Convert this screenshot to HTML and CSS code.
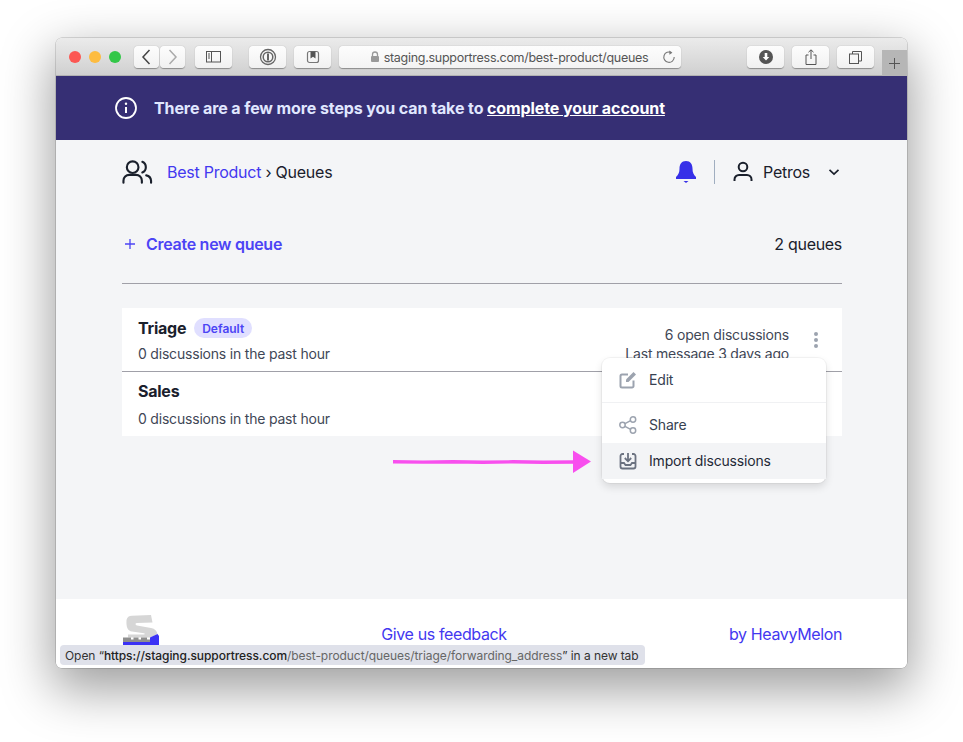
FILE: index.html
```html
<!DOCTYPE html>
<html lang="en">
<head>
<meta charset="utf-8">
<title>Queues</title>
<link rel="stylesheet" href="styles.css">
</head>
<body>
<div class="window">
  <div class="toolbar">
    <div class="lights"><span class="light red"></span><span class="light yellow"></span><span class="light green"></span></div>
    <div class="navpair">
      <div class="tb-btn nav"><svg width="25" height="22" viewBox="0 0 25 22"><path d="M15.5 4 9 11l6.500 7" fill="none" stroke="#444" stroke-width="1.500"/></svg></div>
      <div class="tb-btn nav"><svg width="25" height="22" viewBox="0 0 25 22"><path d="M9.500 4l6.500 7-6.500 7" fill="none" stroke="#aaa" stroke-width="1.500"/></svg></div>
    </div>
    <div class="tb-btn wide sidebar"><svg width="16" height="12" viewBox="0 0 16 12"><rect x=".5" y=".5" width="14" height="10.500" fill="none" stroke="#555"/><path d="M5.500 .5v10.500M2 3h2M2 5h2M2 7h2" stroke="#555" fill="none"/></svg></div>
    <div class="tb-btn wide pw"><svg width="18" height="18" viewBox="0 0 18 18"><circle cx="9" cy="9" r="7.500" fill="none" stroke="#666" stroke-width="1.300"/><circle cx="9" cy="9" r="4.800" fill="none" stroke="#666" stroke-width="1.500"/><path d="M9 5.500v7" stroke="#555" stroke-width="1.800"/></svg></div>
    <div class="tb-btn wide bm"><svg width="14" height="14" viewBox="0 0 14 14"><rect x="1.500" y="1.500" width="11" height="11" rx="2" fill="none" stroke="#777" stroke-width="1.200"/><path d="M4.500 1.500h5v7L7 6.800 4.500 8.500z" fill="#555"/></svg></div>
    <div class="urlbar">
      <span class="url"><svg class="lock" width="10" height="12" viewBox="0 0 10 12"><path d="M2.500 5V3.500a2.500 2.500 0 0 1 5 0V5" fill="none" stroke="#999" stroke-width="1.300"/><rect x="1" y="5" width="8" height="6" rx="1" fill="#999"/></svg>staging.supportress.com/best-product/queues</span>
      <svg class="reload" width="14" height="14" viewBox="0 0 14 14"><path d="M9.500 2.600A5.200 5.200 0 1 0 12.200 7" fill="none" stroke="#777" stroke-width="1.100"/><path d="M7.300 .4 10.400 2.700 7.400 4.800z" fill="#777"/></svg>
    </div>
    <div class="tb-btn wide dl"><svg width="14" height="14" viewBox="0 0 14 14"><circle cx="7" cy="7" r="7" fill="#555"/><path d="M5.700 3h2.600v4h2L7 10.500 3.700 7h2z" fill="#fff"/></svg></div>
    <div class="tb-btn wide share"><svg width="12" height="16" viewBox="0 0 12 16"><path d="M3.500 6H1v9.500h10V6H8.500M6 10V1M3.500 3.200 6 .8l2.500 2.400" fill="none" stroke="#555"/></svg></div>
    <div class="tb-btn wide tabs"><svg width="13" height="13" viewBox="0 0 13 13"><rect x=".5" y="3" width="9" height="9.500" fill="none" stroke="#555"/><path d="M3.500 3V.5h9V10H9.500" fill="none" stroke="#555"/></svg></div>
    <div class="newtab"><svg width="11" height="11" viewBox="0 0 11 11"><path d="M5.500 0v11M0 5.500h11" stroke="#555" stroke-width="1"/></svg></div>
  </div>

  <div class="banner">
    <svg class="banner-icon" width="24" height="24" viewBox="0 0 24 24"><circle cx="12" cy="12" r="10" fill="none" stroke="#fff" stroke-width="1.800"/><path d="M12 11v6" stroke="#fff" stroke-width="2"/><circle cx="12" cy="7.800" r="1.200" fill="#fff"/></svg>
    <p class="banner-text">There are a few more steps you can take to <a class="banner-link" href="#">complete your account</a></p>
  </div>

  <main class="main">
    <header class="head">
      <svg class="users" width="31" height="28" viewBox="0 0 32 28"><circle cx="11" cy="9" r="6" fill="none" stroke="#1a202c" stroke-width="2.200"/><path d="M1.500 25v-2a6 6 0 0 1 6-6h7a6 6 0 0 1 6 6v2" fill="none" stroke="#1a202c" stroke-width="2.200" stroke-linecap="round"/><path d="M21 3.500a6 6 0 0 1 0 11M25 17.500a6 6 0 0 1 5 5.500v2" fill="none" stroke="#1a202c" stroke-width="2.200" stroke-linecap="round"/></svg>
      <div class="crumbs"><a class="crumb-link" href="#">Best Product</a> › Queues</div>
      <svg class="bell" width="22" height="24" viewBox="0 0 22 24"><path d="M11 1c-4.500 0-6.500 3.500-6.500 7.500 0 4-1 6-3.500 8.500v2h20v-2c-2.500-2.500-3.500-4.500-3.500-8.500C17.500 4.500 15.500 1 11 1z" fill="#3730e8"/><path d="M8.500 21h5L11 23z" fill="#3730e8"/></svg>
      <span class="vsep"></span>
      <svg class="user" width="20" height="22" viewBox="0 0 20 22"><circle cx="10" cy="6" r="4.300" fill="none" stroke="#1a202c" stroke-width="2"/><path d="M1.500 20v-1.500a4.500 4.500 0 0 1 4.500-4.500h8a4.500 4.500 0 0 1 4.500 4.500V20" fill="none" stroke="#1a202c" stroke-width="2"/></svg>
      <span class="username">Petros</span>
      <svg class="chev" width="12" height="8" viewBox="0 0 12 8"><path d="M1.500 1.800 6 6l4.500-4.200" fill="none" stroke="#1a202c" stroke-width="1.700"/></svg>
    </header>

    <div class="actions">
      <a class="create" href="#"><svg class="plus" width="12" height="12" viewBox="0 0 12 12"><path d="M6 1v10M1 6h10" stroke="#4c44f5" stroke-width="1.300"/></svg>Create new queue</a>
      <span class="count">2 queues</span>
    </div>
    <hr class="rule">

    <div class="list">
      <div class="row row-first">
        <div class="row-left">
          <div class="title-line"><span class="title">Triage</span><span class="badge">Default</span></div>
          <div class="sub">0 discussions in the past hour</div>
        </div>
        <div class="row-right">
          <div class="meta">6 open discussions</div>
          <div class="meta">Last message 3 days ago</div>
        </div>
        <div class="dots"><span class="dot"></span><span class="dot"></span><span class="dot"></span></div>
      </div>
      <div class="row row-second">
        <div class="row-left">
          <div class="title-line"><span class="title">Sales</span></div>
          <div class="sub sub-wide">0 discussions in the past hour</div>
        </div>
      </div>

      <div class="menu">
        <div class="menu-section">
          <div class="menu-item"><svg class="mi" width="20" height="20" viewBox="0 0 20 20"><path d="M10 4.500H4a1.500 1.500 0 0 0-1.500 1.500v10A1.500 1.500 0 0 0 4 17.500h10a1.500 1.500 0 0 0 1.500-1.500v-5.500" fill="none" stroke="#9ca3af" stroke-width="2"/><path d="M8 12v-2.500L15.500 2 18 4.500 10.500 12z" fill="#9ca3af"/></svg><span class="mi-label">Edit</span></div>
        </div>
        <div class="menu-section divided">
          <div class="menu-item"><svg class="mi" width="20" height="20" viewBox="0 0 20 20"><circle cx="4.500" cy="10" r="2.700" fill="none" stroke="#9ca3af" stroke-width="1.500"/><circle cx="15" cy="4.500" r="2.700" fill="none" stroke="#9ca3af" stroke-width="1.500"/><circle cx="15" cy="15.500" r="2.700" fill="none" stroke="#9ca3af" stroke-width="1.500"/><path d="M7 8.700l5.600-3M7 11.300l5.600 3" stroke="#9ca3af" stroke-width="1.500"/></svg><span class="mi-label">Share</span></div>
          <div class="menu-item active"><svg class="mi" width="20" height="20" viewBox="0 0 20 20"><path d="M6 3H4.500A2 2 0 0 0 2.500 5v10.500a2 2 0 0 0 2 2h11a2 2 0 0 0 2-2V5a2 2 0 0 0-2-2H14" fill="none" stroke="#6b7280" stroke-width="1.800"/><path d="M2.500 12H6l1.500 2h5l1.500-2h3.500" fill="none" stroke="#6b7280" stroke-width="1.800"/><path d="M10 2v8M6.800 7 10 10.300 13.200 7" fill="none" stroke="#6b7280" stroke-width="1.800"/></svg><span class="mi-label">Import discussions</span></div>
        </div>
      </div>
    </div>

    <svg class="arrow" width="202" height="26" viewBox="0 0 202 26"><path d="M2 12.700l30 .4 30-.3 30 .5 30-.5 30 .4 32-.2" fill="none" stroke="#f84fee" stroke-width="3.400"/><path d="M182 1.500 200 12.500 182 24z" fill="#f84fee"/></svg>
  </main>

  <footer class="footer">
    <svg class="logo" width="37" height="30" viewBox="0 0 37 30"><path d="M4.500 5C5 2 7 .8 10 .7L29 0l1.500 7.500L15 8c-2 0-2 2 0 2.500l14 2.500c4 .8 6 3 6.500 6L29 22.500H6v-3h16c1 0 1-1 0-1.200L10 16.500C6 16 4 13 4.500 5z" fill="#d6d6d6"/><path d="M35.500 19 37 21v9H1v-3h27v-4.500z" fill="#3b32f5"/><path d="M1 22.500h8v2h2.500v-2h5v2H19v-2h6v2h3V27H1z" fill="#8f8f8f"/></svg>
    <a class="foot-link" href="#">Give us feedback</a>
    <a class="foot-link" href="#">by HeavyMelon</a>
  </footer>

  <div class="status"><span>Open “</span><span class="st-host">https://staging.supportress.com</span><span class="st-path">/best-product/queues/triage/forwarding_address</span><span>” in a new tab</span></div>
</div>
</body>
</html>
```

FILE: styles.css
```css
* { box-sizing: border-box; }
html, body { margin: 0; background: #fff; }
body {
  width: 963px;
  height: 742px;
  padding: 38px 56px 74px;
  overflow: hidden;
  font-family: Inter, "Noto Sans", sans-serif;
  color: #1a202c;
}
a { text-decoration: none; color: inherit; }

.window {
  position: relative;
  width: 851px;
  height: 630px;
  display: flex;
  flex-direction: column;
  border-radius: 6px;
  overflow: visible;
  background: #fff;
  box-shadow: 0 0 0 .5px rgba(0,0,0,.25), 0 18px 50px 4px rgba(0,0,0,.38);
}

.toolbar {
  height: 38px;
  flex: none;
  display: flex;
  align-items: flex-start;
  padding: 8px 0 0 13px;
  background: linear-gradient(#ebebeb, #d0d0d0);
  border-bottom: 1px solid #b2b2b2;
  border-radius: 6px 6px 0 0;
}
.lights { display: flex; gap: 8px; margin: 5px 13px 0 0; }
.light { width: 12px; height: 12px; border-radius: 50%; }
.red { background: #fc5753; }
.yellow { background: #fdbc40; }
.green { background: #33c748; }

.tb-btn {
  height: 22px;
  flex: none;
  display: flex;
  align-items: center;
  justify-content: center;
  background: linear-gradient(#fdfdfd, #f1f1f1);
  border-radius: 4px;
  box-shadow: 0 .5px 1px rgba(0,0,0,.35);
}
.navpair { display: flex; gap: 1px; margin-right: 10px; }
.nav { width: 25px; }
.wide { width: 37px; }
.sidebar { margin-right: 17px; }
.pw { margin-right: 8px; }
.bm { margin-right: 8px; }
.dl { margin-left: 66px; margin-right: 8px; }
.share { margin-right: 8px; }
.tabs { margin-right: 8px; }

.urlbar {
  position: relative;
  width: 342px;
  height: 22px;
  flex: none;
  display: flex;
  align-items: center;
  justify-content: center;
  background: linear-gradient(#fdfdfd, #f3f3f3);
  border-radius: 4px;
  box-shadow: 0 .5px 1px rgba(0,0,0,.35);
}
.url {
  display: flex;
  align-items: center;
  font-size: 12.5px;
  color: #555;
  padding-right: 2px;
  letter-spacing: -.28px;
}
.lock { margin-right: 4px; }
.reload { position: absolute; right: 5px; top: 4px; }
.newtab {
  width: 25px;
  height: 26px;
  margin-top: 4px;
  flex: none;
  display: flex;
  align-items: center;
  justify-content: center;
  background: #b6b6b6;
}

.banner {
  height: 64px;
  flex: none;
  display: flex;
  align-items: center;
  padding-left: 58px;
  background: #362f74;
}
.banner-icon { flex: none; margin-right: 16px; }
.banner-text { margin: 0; font-size: 16px; font-weight: 700; letter-spacing: -.1px; color: #e0e7ff; }
.banner-link { color: #fff; text-decoration: underline; }

.main {
  position: relative;
  flex: 1;
  padding: 0 65px 0 66px;
  background: #f4f5f7;
}
.head { height: 64px; display: flex; align-items: center; }
.users { margin-right: 14px; flex: none; }
.crumbs { flex: 1; font-size: 16px; letter-spacing: -.25px; color: #1a202c; }
.crumb-link { color: #4338f0; }
.bell { flex: none; margin-right: 17px; }
.vsep { width: 1px; height: 24px; background: #a0aec0; margin-right: 18px; }
.user { flex: none; margin-right: 10px; }
.username { font-size: 16px; letter-spacing: -.25px; margin-right: 18px; }
.chev { flex: none; margin-right: 2px; }

.actions {
  margin-top: 28px;
  height: 24px;
  display: flex;
  align-items: center;
  justify-content: space-between;
  font-size: 16px;
}
.create { display: flex; align-items: center; color: #4c44f5; font-weight: 600; letter-spacing: -.28px; }
.plus { margin: 0 10px 0 2px; }
.count { font-weight: 400; letter-spacing: -.3px; }
.rule { margin: 27px 0 24px; height: 1px; border: 0; background: #a0a0a8; }

.list { position: relative; background: #fff; }
.row { display: flex; padding-left: 16px; }
.row-first { height: 64px; padding-top: 8px; border-bottom: 1px solid #a0a0a8; }
.row-second { height: 64px; padding-top: 7px; }
.row-left { flex: 1; }
.title-line { display: flex; align-items: center; height: 24px; }
.title { font-size: 16px; font-weight: 700; letter-spacing: -.25px; color: #1a202c; }
.badge {
  margin-left: 8px;
  height: 20px;
  padding: 0 8px;
  display: flex;
  align-items: center;
  border-radius: 10px;
  background: #e0dfff;
  color: #4c44f5;
  font-size: 12px;
  font-weight: 600;
}
.sub { margin-top: 4px; font-size: 14px; line-height: 20px; letter-spacing: -.2px; color: #3f4756; }
.sub-wide { margin-top: 6px; }
.row-right { margin-top: 9px; text-align: right; }
.meta { font-size: 14px; line-height: 19px; letter-spacing: -.2px; color: #3f4756; }
.dots {
  width: 53px;
  padding-top: 16px;
  display: flex;
  flex-direction: column;
  align-items: center;
  gap: 2px;
}
.dot { width: 4px; height: 4px; border-radius: 50%; background: #9ca3af; }

.menu {
  position: absolute;
  left: 480px;
  top: 50px;
  width: 224px;
  background: #fff;
  border-radius: 8px;
  box-shadow: 0 0 0 1px rgba(0,0,0,.04), 0 4px 8px rgba(0,0,0,.12);
  z-index: 2;
}
.menu-section { padding: 4px 0; }
.divided { border-top: 1px solid #f0f1f3; }
.menu-item {
  height: 36px;
  display: flex;
  align-items: center;
  padding-left: 16px;
  font-size: 14px;
  color: #374151;
}
.active { background: #f3f4f6; color: #1f2937; }
.mi { flex: none; margin-right: 11px; }
.mi-label { margin-bottom: 2px; letter-spacing: -.17px; }

.arrow { position: absolute; left: 335px; top: 309px; }

.footer {
  height: 69px;
  flex: none;
  display: flex;
  align-items: flex-start;
  justify-content: space-between;
  padding: 23px 65px 0 66px;
  background: #fff;
  border-radius: 0 0 6px 6px;
  font-size: 16px;
  color: #4338f0;
}
.logo { flex: none; margin-top: -7px; }
.foot-link { color: #4338f0; line-height: 24px; letter-spacing: -.37px; }

.status {
  position: absolute;
  left: 4px;
  top: 607px;
  height: 20px;
  width: 585px;
  padding-left: 5px;
  display: flex;
  align-items: center;
  white-space: pre;
  border-radius: 4px;
  background: #dfe1ea;
  font-size: 12px;
  letter-spacing: -.065px;
  color: #333;
}
.st-host { font-weight: 500; color: #222; }
.st-path { color: #666; }
```
